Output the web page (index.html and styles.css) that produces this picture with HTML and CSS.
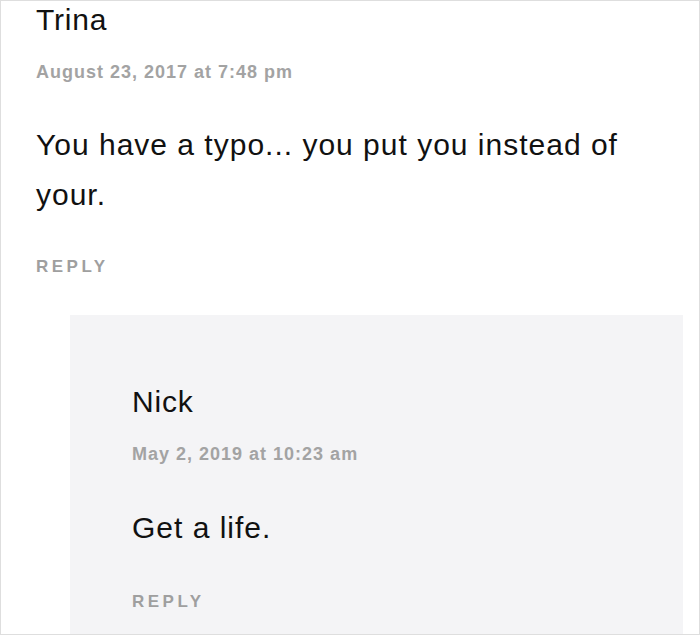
FILE: index.html
```html
<!DOCTYPE html>
<html>
<head>
<meta charset="utf-8">
<link rel="stylesheet" href="styles.css">
</head>
<body>
<div class="frame">
  <div class="comment">
    <div class="author">Trina</div>
    <div class="date">August 23, 2017 at 7:48 pm</div>
    <p class="text">You have a typo... you put you instead of your.</p>
    <div class="reply">REPLY</div>
  </div>
  <div class="child">
    <div class="author">Nick</div>
    <div class="date">May 2, 2019 at 10:23 am</div>
    <p class="text">Get a life.</p>
    <div class="reply">REPLY</div>
  </div>
</div>
</body>
</html>
```

FILE: styles.css
```css
html, body {
  margin: 0;
  padding: 0;
  background: #fff;
}
body {
  font-family: "Liberation Sans", Arial, sans-serif;
  color: #111;
}
.frame {
  width: 700px;
  height: 635px;
  box-sizing: border-box;
  border: 1px solid #dedede;
  overflow: hidden;
}
.comment {
  padding: 1px 0 0 35px;
  width: 610px;
}
.author {
  font-size: 30px;
  line-height: 36px;
  letter-spacing: 0.8px;
}
.date {
  margin-top: 23px;
  font-size: 18px;
  font-weight: bold;
  color: #a3a3a3;
  line-height: 22px;
  letter-spacing: 1px;
}
.text {
  margin: 37px 0 0;
  font-size: 30px;
  line-height: 50px;
  letter-spacing: 1px;
}
.reply {
  margin-top: 37px;
  font-size: 17px;
  font-weight: bold;
  letter-spacing: 3.5px;
  color: #9f9f9f;
  line-height: 20px;
}
.child {
  margin: 38px 16px 0 69px;
  background: #f4f4f6;
  padding: 69px 0 40px 62px;
}
.child .text {
  margin-top: 38px;
}
.child .reply {
  margin-top: 39px;
}
```
